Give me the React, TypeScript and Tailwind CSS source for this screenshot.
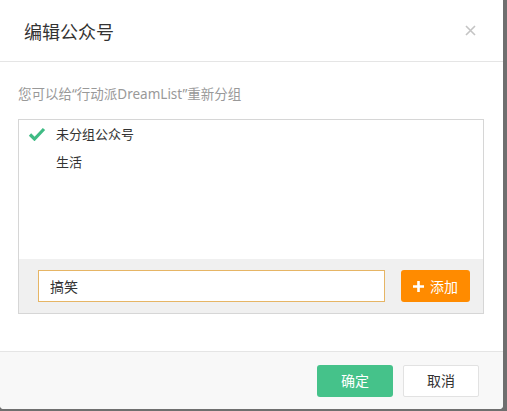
import { useState } from "react";

const GROUPS = [
  { name: "未分组公众号", checked: true },
  { name: "生活", checked: false },
];

export default function App() {
  const [value, setValue] = useState("搞笑");

  return (
    <div
      className="h-[411px] w-[507px] overflow-hidden bg-[#6f6f6f]"
      style={{ fontFamily: '"Noto Sans CJK SC", "Noto Sans", sans-serif' }}
    >
      <div className="flex h-[409px] w-[503px] flex-col rounded-b-[4px] bg-white">
        {/* header */}
        <div className="flex h-[62px] items-center justify-between border-b border-[#e5e5e5] pl-6 pr-[27px]">
          <div className="text-[18px] leading-none text-[#333]">编辑公众号</div>
          <svg width="11" height="11" viewBox="0 0 11 11" className="text-[#c4c4c4]">
            <path d="M1 1L10 10M10 1L1 10" stroke="currentColor" strokeWidth="1.6" />
          </svg>
        </div>

        {/* body */}
        <div className="px-[18px] pt-[23px]">
          <div
            className="text-[13.5px] leading-[18px] text-[#999]"
            style={{ fontFamily: '"Noto Sans", "Noto Sans CJK SC", sans-serif' }}
          >
            您可以给“行动派DreamList”重新分组
          </div>

          <div className="mt-4 mr-px flex h-[195px] flex-col border border-[#d6d6d6]">
            <ul className="flex-1">
              {GROUPS.map((g) => (
                <li key={g.name} className="flex h-[28px] items-center pl-[9px] text-[13px] text-[#333]">
                  <span className="flex w-[18px] justify-center">
                    {g.checked && (
                      <svg width="18" height="14" viewBox="0 0 18 14">
                        <path d="M2 7.5L6.5 12L16 2" fill="none" stroke="#3fbb84" strokeWidth="3.2" />
                      </svg>
                    )}
                  </span>
                  <span className="ml-[10px]">{g.name}</span>
                </li>
              ))}
            </ul>
            <div className="flex h-[54px] items-center gap-4 bg-[#f0f0f0] pl-[19px] pr-[13px]">
              <input
                value={value}
                onChange={(e) => setValue(e.target.value)}
                className="h-[32px] w-[347px] border border-[#e6b565] bg-white px-[11px] text-[14px] text-[#333] outline-none"
              />
              <button className="flex h-[32px] w-[69px] items-center justify-center gap-[6px] rounded-[3px] bg-[#ff8b00] text-[14px] text-white">
                <svg width="11" height="11" viewBox="0 0 11 11">
                  <path d="M5.5 0V11M0 5.5H11" stroke="white" strokeWidth="2.6" />
                </svg>
                添加
              </button>
            </div>
          </div>
        </div>

        {/* footer */}
        <div className="mt-auto flex h-[58px] items-center justify-end gap-[10px] rounded-b-[4px] border-t border-[#e5e5e5] bg-[#f8f8f8] pr-6">
          <button className="h-[32px] w-[76px] rounded-[3px] bg-[#45c28a] text-[14px] text-white">确定</button>
          <button className="h-[32px] w-[76px] rounded-[2px] border border-[#e2e2e2] bg-white text-[14px] text-[#333]">取消</button>
        </div>
      </div>
    </div>
  );
}
